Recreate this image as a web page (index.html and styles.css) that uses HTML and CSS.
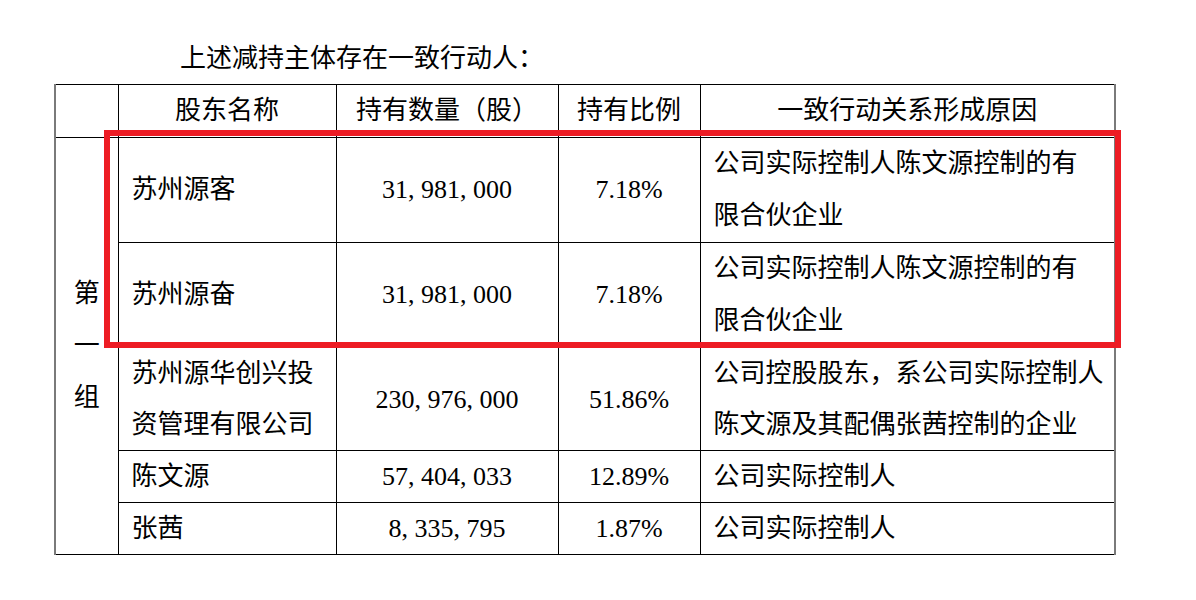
FILE: index.html
```html
<!DOCTYPE html>
<html lang="zh-CN">
<head>
<meta charset="utf-8">
<title>一致行动人</title>
<link rel="stylesheet" href="styles.css">
</head>
<body>
<div class="page">
  <p class="intro">上述减持主体存在一致行动人：</p>
  <div class="table-wrap">
    <table class="holders">
      <colgroup>
        <col class="c-group">
        <col class="c-name">
        <col class="c-qty">
        <col class="c-pct">
        <col class="c-reason">
      </colgroup>
      <thead>
        <tr>
          <th></th>
          <th>股东名称</th>
          <th>持有数量（股）</th>
          <th>持有比例</th>
          <th>一致行动关系形成原因</th>
        </tr>
      </thead>
      <tbody>
        <tr class="tall">
          <td class="group" rowspan="5">第<br>一<br>组</td>
          <td class="name">苏州源客</td>
          <td class="num">31<span class="c">,</span>981<span class="c">,</span>000</td>
          <td class="num">7.18%</td>
          <td class="reason">公司实际控制人陈文源控制的有<br>限合伙企业</td>
        </tr>
        <tr class="tall">
          <td class="name">苏州源奋</td>
          <td class="num">31<span class="c">,</span>981<span class="c">,</span>000</td>
          <td class="num">7.18%</td>
          <td class="reason">公司实际控制人陈文源控制的有<br>限合伙企业</td>
        </tr>
        <tr class="tall short">
          <td class="name">苏州源华创兴投<br>资管理有限公司</td>
          <td class="num">230<span class="c">,</span>976<span class="c">,</span>000</td>
          <td class="num">51.86%</td>
          <td class="reason">公司控股股东，系公司实际控制人<br>陈文源及其配偶张茜控制的企业</td>
        </tr>
        <tr>
          <td class="name">陈文源</td>
          <td class="num">57<span class="c">,</span>404<span class="c">,</span>033</td>
          <td class="num">12.89%</td>
          <td class="reason">公司实际控制人</td>
        </tr>
        <tr>
          <td class="name">张茜</td>
          <td class="num">8<span class="c">,</span>335<span class="c">,</span>795</td>
          <td class="num">1.87%</td>
          <td class="reason">公司实际控制人</td>
        </tr>
      </tbody>
    </table>
    <div class="highlight"></div>
  </div>
</div>
</body>
</html>
```

FILE: styles.css
```css
html, body {
  margin: 0;
  padding: 0;
  background: #ffffff;
}

body {
  font-family: "Liberation Serif", "Noto Sans CJK SC", serif;
  color: #000000;
  font-size: 26px;
}

.page {
  padding: 33px 0 0 54px;
}

.intro {
  margin: 0;
  padding-left: 126px;
  line-height: 51px;
  height: 51px;
  font-size: 26px;
}

.table-wrap {
  position: relative;
  width: 1062px;
}

.holders {
  border-collapse: collapse;
  table-layout: fixed;
  width: 1062px;
  border-top: 1px solid #000000;
  border-bottom: 1px solid #000000;
  border-left: 2px solid #7a7a7a;
  border-right: 2px solid #7a7a7a;
}

.c-group { width: 63px; }
.c-name { width: 218px; }
.c-qty { width: 222px; }
.c-pct { width: 142px; }
.c-reason { width: 415px; }

.holders th,
.holders td {
  border: 1px solid #000000;
  padding: 0;
  font-weight: normal;
  vertical-align: middle;
  white-space: nowrap;
}

.holders th {
  text-align: center;
  line-height: 52px;
  height: 52px;
}

.holders td {
  line-height: 51px;
  height: 51px;
}

.holders tr.tall td {
  line-height: 52px;
  height: 104px;
}

.holders tr.short td {
  line-height: 51px;
  height: 102px;
}

.holders td.group,
.holders tr.tall td.group {
  text-align: center;
  line-height: 52px;
  height: auto;
  border-left: 2px solid #7a7a7a;
}

.holders td.name {
  text-align: left;
  padding-left: 13px;
}

.holders td.num {
  text-align: center;
  font-family: "Liberation Serif", serif;
}

.holders td.reason {
  text-align: left;
  padding-left: 13px;
}

.c {
  display: inline-block;
  width: 0.5em;
  text-align: left;
}

.highlight {
  position: absolute;
  left: 50px;
  top: 46px;
  width: 1017px;
  height: 218px;
  box-sizing: border-box;
  border: 6px solid #ed1c24;
  pointer-events: none;
}
```
